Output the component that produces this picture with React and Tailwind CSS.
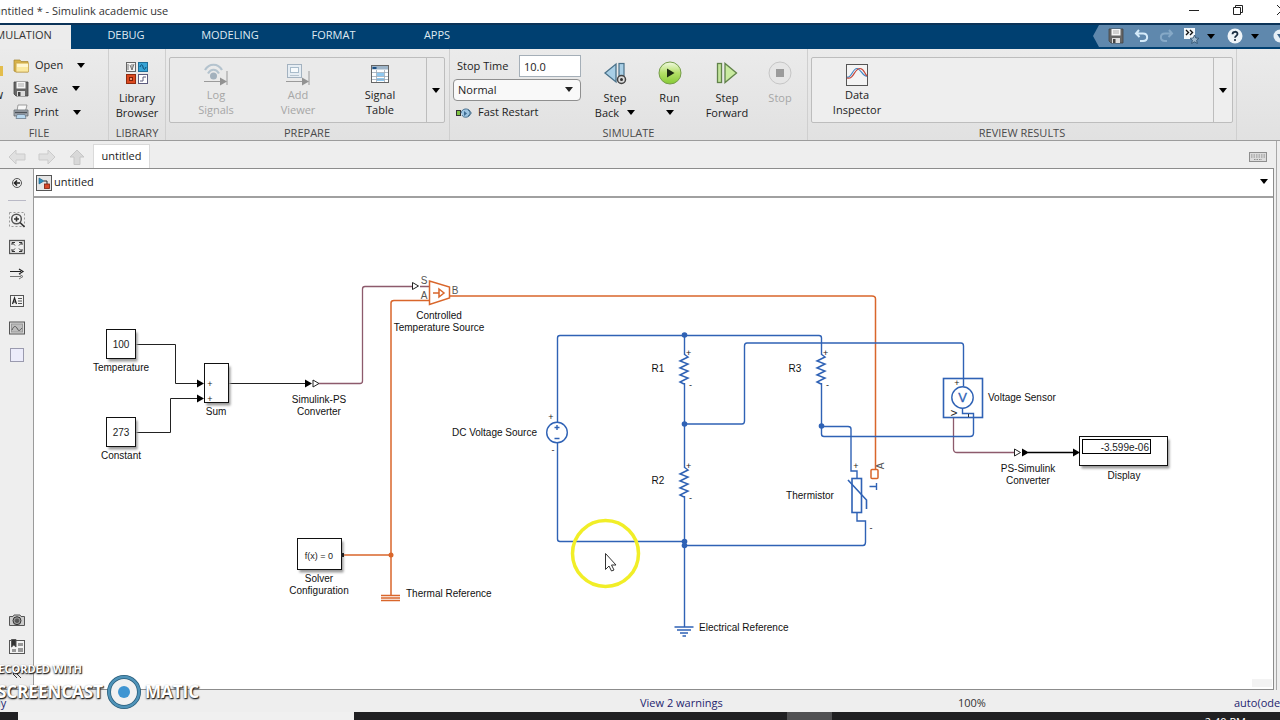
import React from "react";

const UI = "font-['Open_Sans','Noto_Sans',sans-serif]";

function Caret({ className = "" }) {
  return (
    <svg viewBox="0 0 8 5" className={"h-[5px] w-2 shrink-0 " + className} aria-hidden="true">
      <path d="M0 0H8L4 5Z" fill="currentColor" />
    </svg>
  );
}

/* ---------- ribbon icons ---------- */

const FolderIcon = () => (
  <svg viewBox="0 0 17 16" className="h-4 w-[17px]">
    <path d="M1 3V13L3 14H15V3.500H8L7 2H1Z" fill="#d9b44a" stroke="#a5842f" strokeWidth=".7" />
    <path d="M3 5H15.500V14H3Z" fill="#fbe9a0" stroke="#c4a14a" strokeWidth=".7" />
    <path d="M4 6H15V9H4Z" fill="#fff6d0" />
  </svg>
);

const SaveIcon = ({ className = "h-4 w-4" }) => (
  <svg viewBox="0 0 16 16" className={className}>
    <path d="M1 1H15V15H3L1 13Z" fill="#666" stroke="#444" strokeWidth=".8" />
    <rect x="3.500" y="1" width="9" height="6.500" fill="#f6f6f6" />
    <path d="M5 3H11M5 5H11" stroke="#aaa" />
    <rect x="4" y="10" width="8" height="5" fill="#ddd" />
    <rect x="5" y="11" width="2.500" height="4" fill="#444" />
  </svg>
);

const PrintIcon = () => (
  <svg viewBox="0 0 16 16" className="h-4 w-4">
    <path d="M4 7L5 1H14L12.500 7Z" fill="#f8f8f8" stroke="#888" strokeWidth=".8" />
    <path d="M1 6H15V12H1Z" fill="#a4aab2" stroke="#63696f" strokeWidth=".8" />
    <path d="M2 8.500H14" stroke="#4c5258" strokeWidth="1.500" />
    <path d="M4 10.500H12L13 14.500H3Z" fill="#b8d8ef" stroke="#6c7c8c" strokeWidth=".8" />
  </svg>
);

const LibraryIcon = () => (
  <svg viewBox="0 0 24 24" className="h-6 w-6">
    <rect x="1.500" y="1.500" width="9" height="9" fill="#f3f3f3" stroke="#666" />
    <path d="M3 3V9M5 4L7 9V3M9 3L7 9" stroke="#777" fill="none" />
    <rect x="13.500" y="1.500" width="9" height="9" fill="#35a3d6" stroke="#1e6d97" />
    <path d="M15 6C16 3 17.500 3 18 6S20 9 21 6" stroke="#0b4c74" fill="none" />
    <rect x="1.500" y="13.500" width="9" height="9" fill="#dc4a20" stroke="#8f2c10" />
    <rect x="4.500" y="16.500" width="3" height="3" fill="#f0916e" stroke="#7b210a" />
    <rect x="13.500" y="13.500" width="9" height="9" fill="#fff" stroke="#5b5b7d" />
    <path d="M15 20H18V16H21" stroke="#5b5b7d" fill="none" />
  </svg>
);

const LogIcon = () => (
  <svg viewBox="0 0 24 24" className="h-6 w-6" fill="none">
    <path d="M1 7C5 0 14 0 18 7" stroke="#b4c3ce" strokeWidth="2.200" />
    <path d="M4 10.500C7 5.500 12 5.500 15 10.500" stroke="#b4c3ce" strokeWidth="2.200" />
    <circle cx="9.500" cy="13" r="3.500" fill="#a3b1bd" />
    <path d="M0 18.500H18M23 8V22" stroke="#9a9a9a" />
    <path d="M16 14.500L23 18.500L16 22.500Z" fill="#929292" />
  </svg>
);

const ViewerIcon = () => (
  <svg viewBox="0 0 24 24" className="h-6 w-6" fill="none">
    <rect x="1.500" y="1.500" width="14" height="13" fill="#e6edf3" stroke="#a3b2c0" />
    <rect x="4.500" y="4.500" width="8" height="5" fill="#f7fafc" stroke="#a9bccb" />
    <path d="M4 12.500H13" stroke="#b7c4cf" />
    <path d="M0 18.500H18M23 8V22" stroke="#9a9a9a" />
    <path d="M16 14.500L23 18.500L16 22.500Z" fill="#929292" />
  </svg>
);

const TableIcon = () => (
  <svg viewBox="0 0 18 18" className="mt-[2px] mb-1 h-[18px] w-[18px]" fill="none">
    <rect x=".5" y=".5" width="17" height="17" fill="#fff" stroke="#666" />
    <rect x="1" y="1" width="16" height="3.500" fill="#9db4c8" />
    <rect x="1.500" y="2" width="4" height="2" fill="#1c4f83" />
    <rect x="6" y="8" width="7" height="3" fill="#8fc8f0" />
    <rect x="6" y="13" width="7" height="3" fill="#8fc8f0" />
    <path d="M5.500 5V17M13.500 5V17M1 7.500H17M1 11.500H17M1 14.500H17" stroke="#9aa9b7" strokeWidth=".8" />
  </svg>
);

const InspectorIcon = () => (
  <svg viewBox="0 0 24 24" className="h-6 w-6" fill="none">
    <rect x="1.500" y="1.500" width="21" height="21" fill="#f4f4f4" stroke="#555" />
    <path d="M2 14C6 16 8 5 12 5.500S18 14 22 13" stroke="#3f86c6" strokeWidth="1.200" />
    <path d="M2 15C9 17 9 5.500 15 5.500C19 5.500 19 10 22 13" stroke="#c4473b" strokeWidth="1.200" />
  </svg>
);

const StepBackIcon = () => (
  <svg viewBox="0 0 24 24" className="h-6 w-6">
    <path d="M13 3V21L2 12Z" fill="#a9cfe6" stroke="#4a7189" strokeWidth="1.300" />
    <rect x="16" y="2.500" width="5" height="15" fill="#a9cfe6" stroke="#4a7189" strokeWidth="1.200" />
    <circle cx="18.500" cy="18.500" r="4" fill="#d9d9d9" stroke="#444" strokeWidth="1.500" />
    <circle cx="18.500" cy="18.500" r="1.500" fill="#333" />
  </svg>
);

const RunIcon = () => (
  <svg viewBox="0 0 24 24" className="h-6 w-6">
    <defs>
      <linearGradient id="run" x1="0" x2="0" y1="0" y2="1">
        <stop offset="0" stopColor="#f1f9e2" />
        <stop offset=".5" stopColor="#b4e068" />
        <stop offset="1" stopColor="#86cb36" />
      </linearGradient>
    </defs>
    <circle cx="12" cy="12" r="11" fill="url(#run)" stroke="#769d4b" />
    <path d="M9 7.500L16.500 12L9 16.500Z" fill="#1d2b12" />
  </svg>
);

const StepForwardIcon = () => (
  <svg viewBox="0 0 24 24" className="h-6 w-6">
    <rect x="2.500" y="2.500" width="4" height="19" fill="#c4e59c" stroke="#62834b" strokeWidth="1.300" />
    <path d="M10 2.500V21.500L21.500 12Z" fill="#c9eba0" stroke="#62834b" strokeWidth="1.300" />
  </svg>
);

const StopIcon = () => (
  <svg viewBox="0 0 24 24" className="h-6 w-6">
    <circle cx="12" cy="12" r="11" fill="#e6e6e6" stroke="#c6c6c6" />
    <rect x="8" y="8" width="8" height="8" fill="#9b9b9b" />
  </svg>
);

const FastRestartIcon = () => (
  <svg viewBox="0 0 16 12" className="h-3 w-4" fill="none">
    <rect x=".5" y="3.500" width="4" height="5" fill="#7ec242" stroke="#333" />
    <path d="M5 6C6 1 12 1 14 4V8C12 11 7 11 6 8" fill="#9cc4e2" stroke="#47708f" />
    <path d="M8 4V9L11 6.500Z" fill="#3c6b92" />
    <path d="M12 3L15.500 6L12 9" stroke="#47708f" />
  </svg>
);

/* ---------- ribbon parts ---------- */

function Section({ label, className = "", children }) {
  return (
    <section className={"flex shrink-0 flex-col border-r border-[#cfcfcf] " + className}>
      <div className="flex h-[75px] shrink-0">{children}</div>
      <h2 className="flex flex-1 justify-center text-[11px] leading-[17px] text-[#4a4a4a]">{label}</h2>
    </section>
  );
}

function BigButton({ icon, lines, disabled, caret, className = "" }) {
  return (
    <button
      type="button"
      disabled={disabled}
      className={
        "flex flex-col items-center text-[11px] leading-[15px] " +
        (disabled ? "text-[#a6a6a6] " : "text-[#222] ") +
        className
      }
    >
      {icon}
      <span>{lines[0]}</span>
      <span className="flex h-[15px] items-center gap-2">
        {lines[1]}
        {caret && <Caret className="text-black" />}
      </span>
    </button>
  );
}

function FileRow({ icon, label, gap }) {
  return (
    <button type="button" className="flex h-6 items-center text-[11px] text-[#222]">
      {icon}
      <span className={"pl-[5px] text-left " + gap}>{label}</span>
      <Caret className="text-black" />
    </button>
  );
}

function Ribbon() {
  return (
    <div className="flex h-[92px] shrink-0 overflow-hidden border-b border-[#9c9c9c] bg-linear-to-b from-[#ebebeb] to-[#e1e1e1]">
      <Section label="FILE" className="-ml-[30px] w-[139px]">
        <button type="button" className="flex w-[33px] flex-col items-end pt-[17px] text-[12px] text-[#222]">
          <svg viewBox="0 0 20 20" className="h-5 w-5">
            <rect x="2" y="0" width="18" height="10" fill="#e3bd4c" />
          </svg>
          New
        </button>
        <div className="flex flex-col pt-[5px] pl-[10px]">
          <FileRow icon={<FolderIcon />} label="Open" gap="w-[47px]" />
          <FileRow icon={<SaveIcon />} label="Save" gap="w-[43px]" />
          <FileRow icon={<PrintIcon />} label="Print" gap="w-[44px]" />
        </div>
      </Section>
      <Section label="LIBRARY" className="w-[57px]">
        <BigButton icon={<LibraryIcon />} lines={["Library", "Browser"]} className="w-full pt-3 [&>svg]:mb-[5px]" />
      </Section>
      <Section label="PREPARE" className="w-[284px] pl-[3px] pr-1">
        <div className="mt-2 flex h-[66px] flex-1 rounded-xs border border-[#bdbdbd] bg-[#eaeaea]">
          <div className="flex flex-1 pt-[5px] pl-[5px]">
            <BigButton icon={<LogIcon />} lines={["Log", "Signals"]} disabled className="w-[82px]" />
            <BigButton icon={<ViewerIcon />} lines={["Add", "Viewer"]} disabled className="w-[82px]" />
            <BigButton icon={<TableIcon />} lines={["Signal", "Table"]} className="w-[82px]" />
          </div>
          <button type="button" aria-label="More prepare tools" className="grid w-[18px] place-items-center border-l border-[#bdbdbd]">
            <Caret />
          </button>
        </div>
      </Section>
      <Section label="SIMULATE" className="w-[358px]">
        <div className="flex w-[131px] flex-col pt-[6px] pl-[3px] text-[11px] text-[#222]">
          <div className="flex h-[22px] items-center justify-between">
            <label htmlFor="stop" className="pl-1">Stop Time</label>
            <input id="stop" defaultValue="10.0" className="h-[22px] w-[62px] border border-[#a5afb8] bg-white px-1" />
          </div>
          <div className="relative mt-[2px]">
            <select aria-label="Simulation mode" className="block h-[22px] w-full appearance-none rounded border border-[#8f8f8f] bg-[#f9f9f9] px-1">
              <option>Normal</option>
            </select>
            <Caret className="pointer-events-none absolute top-2 right-2" />
          </div>
          <button type="button" className="flex h-6 items-center gap-[6px] pl-[3px]">
            <FastRestartIcon />
            Fast Restart
          </button>
        </div>
        <div className="flex pt-3 pl-[7px] [&_svg.h-6]:mb-[5px]">
          <BigButton icon={<StepBackIcon />} lines={["Step", "Back"]} caret className="w-[54px]" />
          <BigButton icon={<RunIcon />} lines={["Run", ""]} caret className="w-[55px] [&>span:last-child]:gap-0" />
          <BigButton icon={<StepForwardIcon />} lines={["Step", "Forward"]} className="w-[60px]" />
          <BigButton icon={<StopIcon />} lines={["Stop", ""]} disabled className="w-[46px]" />
        </div>
      </Section>
      <Section label="REVIEW RESULTS" className="w-[429px] px-[3px]">
        <div className="mt-2 flex h-[66px] flex-1 rounded-xs border border-[#bdbdbd] bg-[#eeeeee]">
          <div className="flex flex-1 pt-[5px]">
            <BigButton icon={<InspectorIcon />} lines={["Data", "Inspector"]} className="w-[90px]" />
          </div>
          <button type="button" aria-label="More review tools" className="grid w-[19px] place-items-center border-l border-[#bdbdbd]">
            <Caret />
          </button>
        </div>
      </Section>
    </div>
  );
}

/* ---------- title and tabs ---------- */

function TitleBar() {
  return (
    <header className="flex h-[23px] shrink-0 items-center justify-between overflow-hidden bg-white">
      <h1 className="-ml-[6px] text-[11px] whitespace-pre text-[#333]">untitled * - Simulink academic use</h1>
      <div className="-mr-[8px] flex h-full items-center gap-[33px] pb-[2px] text-[#222]">
        <button type="button" aria-label="Minimize">
          <svg viewBox="0 0 11 11" className="h-[11px] w-[11px]"><path d="M0 5.500H10" stroke="currentColor" /></svg>
        </button>
        <button type="button" aria-label="Restore">
          <svg viewBox="0 0 11 11" className="h-[11px] w-[11px]" fill="none" stroke="currentColor">
            <path d="M.5 2.500H7.500V9.500H.5ZM2.500 2.500V.5H9.500V7.500H7.500" />
          </svg>
        </button>
        <button type="button" aria-label="Close">
          <svg viewBox="0 0 11 11" className="h-[11px] w-[11px]" stroke="currentColor"><path d="M0 0L10 10M10 0L0 10" /></svg>
        </button>
      </div>
    </header>
  );
}

function QuickAccess() {
  return (
    <div className="flex h-[22px] w-[187px] items-center overflow-hidden bg-[#5f88ad] pl-[15px] text-black [clip-path:polygon(6px_0,100%_0,100%_100%,6px_100%,0_50%)]">
      <button type="button" aria-label="Save"><SaveIcon /></button>
      <button type="button" aria-label="Undo" className="ml-[10px]">
        <svg viewBox="0 0 15 14" className="h-[14px] w-[15px]" fill="none">
          <path d="M5 1L2 4.500L5.500 8M2 4.500H9C14.500 4.500 14.500 12 9 12H6" stroke="#d5ebfa" strokeWidth="2" />
        </svg>
      </button>
      <button type="button" aria-label="Redo" className="ml-[10px]">
        <svg viewBox="0 0 15 14" className="h-[14px] w-[15px]" fill="none">
          <path d="M10 1L13 4.500L9.500 8M13 4.500H6C.5 4.500 .5 12 6 12H8" stroke="#86a9c7" strokeWidth="2" />
        </svg>
      </button>
      <button type="button" aria-label="Favorites" className="ml-[10px] flex items-center gap-2">
        <svg viewBox="0 0 15 16" className="h-4 w-[15px]" fill="none">
          <rect x="0" y="0" width="11" height="11" fill="#f3f7fa" />
          <path d="M2 2L4.500 4.500L2 7M6 2L8.500 4.500L6 7" stroke="#111" strokeWidth="1.400" />
          <path d="M10.500 7L11.800 10L15 10.300L12.600 12.300L13.400 15.500L10.500 13.800L7.600 15.500L8.400 12.300L6 10.300L9.200 10Z" fill="#9cb7cd" stroke="#2f4f6b" strokeWidth=".8" />
        </svg>
        <Caret />
      </button>
      <button type="button" aria-label="Help" className="ml-3 flex items-center gap-2">
        <svg viewBox="0 0 16 16" className="h-4 w-4" fill="none">
          <circle cx="8" cy="8" r="7.500" fill="#eef4f8" />
          <path d="M5.500 6.200C5.500 3 10.500 3 10.500 6C10.500 7.800 8 8 8 9.800" stroke="#1b2f42" strokeWidth="1.800" />
          <circle cx="8" cy="12" r="1.100" fill="#1b2f42" />
        </svg>
        <Caret />
      </button>
      <button type="button" aria-label="Collapse toolstrip" className="ml-[14px] shrink-0">
        <svg viewBox="0 0 14 14" className="h-[14px] w-[14px]">
          <circle cx="7" cy="7" r="6.500" fill="#e6eff6" />
          <path d="M4 5H10L7 9.500Z" fill="#3d658b" />
        </svg>
      </button>
    </div>
  );
}

function TabBar() {
  return (
    <nav className="flex h-[26px] shrink-0 overflow-hidden border-t-2 border-[#0b3358] bg-[#004071] text-[11px] text-[#dfe9f1]">
      <button type="button" className="-ml-[33px] w-[104px] bg-[#ececec] pb-1 text-[#333]">SIMULATION</button>
      <button type="button" className="ml-[3px] w-[104px] pb-1">DEBUG</button>
      <button type="button" className="w-[104px] pb-1">MODELING</button>
      <button type="button" className="w-[103px] pb-1">FORMAT</button>
      <button type="button" className="w-[104px] pb-1">APPS</button>
      <div className="flex-1" />
      <QuickAccess />
    </nav>
  );
}

function DocTabs() {
  const arrow = "M1 8L8 1V5H17V11H8V15Z";
  return (
    <div className="flex h-[27px] shrink-0 items-end bg-[#eeeeee] pl-2">
      <div className="flex h-full items-center gap-3 pt-1 pr-[7px]">
        <button type="button" aria-label="Back">
          <svg viewBox="0 0 18 16" className="h-4 w-[18px]"><path d={arrow} fill="#e0e0e0" stroke="#cbcbcb" /></svg>
        </button>
        <button type="button" aria-label="Forward">
          <svg viewBox="0 0 18 16" className="h-4 w-[18px] -scale-x-100"><path d={arrow} fill="#e0e0e0" stroke="#cbcbcb" /></svg>
        </button>
        <button type="button" aria-label="Up">
          <svg viewBox="0 0 18 16" className="h-4 w-[18px]"><path d="M9 1L16 8H12V15.500H6V8H2Z" fill="#d8d8d8" stroke="#c6c6c6" /></svg>
        </button>
      </div>
      <button type="button" className="h-6 w-[57px] border border-b-0 border-[#dadada] bg-white text-[11px] text-[#222]">untitled</button>
      <div className="flex-1" />
      <button type="button" aria-label="Keyboard" className="mr-[7px] self-center pt-1">
        <svg viewBox="0 0 18 10" className="h-[10px] w-[18px]" fill="none">
          <rect x=".5" y=".5" width="17" height="9" fill="#dcdcdc" stroke="#8e8e8e" />
          <path d="M2 3H16M2 5H16M5 7.500H13" stroke="#8e8e8e" strokeDasharray="1.500 1" />
        </svg>
      </button>
    </div>
  );
}

/* ---------- left palette ---------- */

function Tool({ label, children }) {
  return (
    <button type="button" aria-label={label} className="grid h-[27px] w-full shrink-0 place-items-center">
      <svg viewBox="0 0 16 16" className="h-4 w-4" fill="none" stroke="#555">{children}</svg>
    </button>
  );
}

function Palette() {
  return (
    <aside className="flex w-[34px] shrink-0 flex-col items-center overflow-hidden border-r border-[#9a9a9a] bg-[#eeeeee] pb-[2px]">
      <Tool label="Hide browser">
        <circle cx="8" cy="8" r="4.500" />
        <path d="M11 8H6M8 5.500L5.500 8L8 10.500" stroke="#222" strokeWidth="1.600" />
      </Tool>
      <div className="mt-1 mb-[5px] h-px w-[18px] shrink-0 bg-[#b9b9c6]" />
      <Tool label="Zoom">
        <rect x=".5" y=".5" width="15" height="14" strokeDasharray="2 2" stroke="#999" />
        <circle cx="7.500" cy="7" r="4.800" strokeWidth="1.500" fill="#f6f6f6" />
        <path d="M5 7H10M7.500 4.500V9.500M11 10.500L15.500 15" stroke="#333" strokeWidth="1.600" />
      </Tool>
      <Tool label="Fit to view">
        <rect x=".5" y="1.500" width="15" height="13" strokeWidth="1.300" />
        <path d="M3 6V3.500H6M3.500 4L6 6.500M10 3.500H13V6M12.500 4L10 6.500M3 10V12.500H6M3.500 12L6 9.500M10 12.500H13V10M12.500 12L10 9.500" stroke="#333" />
      </Tool>
      <Tool label="Signals">
        <path d="M1 5.500H12M10 3L14 5.500L10 8" stroke="#222" strokeWidth="1.200" />
        <path d="M1 10.500H12M10 8L14 10.500L10 13" stroke="#777" />
      </Tool>
      <Tool label="Annotation">
        <rect x="1.500" y="2.500" width="13" height="11" fill="#f3f3f3" />
        <path d="M3.500 11L5.500 5L7.500 11M4 9H7" stroke="#222" strokeWidth="1.200" />
        <path d="M9 5.500H13M9 8H13M9 10.500H13" />
      </Tool>
      <Tool label="Image">
        <rect x=".5" y="2" width="15" height="12" fill="#ddd" />
        <rect x="2.500" y="4" width="11" height="8" fill="#bdbdbd" stroke="#999" />
        <path d="M3 10C5 5 7 6 8.500 9S11 10 13 8" />
      </Tool>
      <Tool label="Area">
        <rect x="1.500" y="1.500" width="13" height="13" fill="#ececfb" stroke="#9a9aae" />
      </Tool>
      <div className="flex-1" />
      <Tool label="Screenshot">
        <path d="M.5 4.500H4L5 3H11L12 4.500H15.500V13.500H.5Z" fill="#ccc" />
        <circle cx="8" cy="8.700" r="4" fill="#999" stroke="#333" />
        <circle cx="8" cy="8.700" r="1.800" fill="#555" />
      </Tool>
      <Tool label="Model browser">
        <rect x=".5" y="1.500" width="15" height="13" fill="#f3f3f3" />
        <path d="M2.500 .5H7V8L4.800 6L2.500 8Z" fill="#333" />
        <path d="M9 4H14V7H9ZM3 10H7V13H3ZM9 9H14V13H9Z" fill="#999" stroke="none" />
      </Tool>
      <Tool label="Collapse palette">
        <path d="M8 4L4 8L8 12M12 4L8 8L12 12" stroke="#333" />
      </Tool>
    </aside>
  );
}

/* ---------- block diagram ---------- */

const BLUE = "#2f62b5";
const ORANGE = "#d9662b";

function Label({ x, y, lines, anchor = "middle" }) {
  return (
    <text x={x} y={y} textAnchor={anchor} fontSize="10" fill="#111">
      {lines.map((l, i) => (
        <tspan key={l} x={x} dy={i ? 12 : 0}>{l}</tspan>
      ))}
    </text>
  );
}

function Block({ x, y, w, h }) {
  return (
    <g>
      <rect x={x + 2} y={y + 3} width={w} height={h} fill="#9b9b9b" filter="url(#soft)" />
      <rect x={x} y={y} width={w} height={h} fill="#fff" stroke="#111" />
    </g>
  );
}

function Resistor({ x, y }) {
  return (
    <g>
      <path
        d={`M${x} ${y}L${x + 4} ${y + 3}L${x - 4} ${y + 7}L${x + 4} ${y + 10}L${x - 4} ${y + 14}L${x + 4} ${y + 17}L${x - 4} ${y + 21}L${x + 4} ${y + 24}L${x - 4} ${y + 28}L${x} ${y + 30}`}
        stroke={BLUE}
        strokeWidth="1.500"
        fill="none"
      />
      <text x={x + 2} y={y + 2} fontSize="9" fill="#222">+</text>
      <text x={x + 5} y={y + 34} fontSize="9" fill="#222">-</text>
    </g>
  );
}

const Arrow = ({ x, y }) => <path d={`M${x - 7} ${y - 4}L${x} ${y}L${x - 7} ${y + 4}Z`} fill="#000" />;
const OpenArrow = ({ x, y }) => (
  <path d={`M${x - 6} ${y - 3.5}L${x} ${y}L${x - 6} ${y + 3.5}Z`} fill="#fff" stroke="#222" />
);

function Diagram() {
  return (
    <svg
      viewBox="34 198 1238 490"
      className="block h-[490px] w-[1238px] font-['Liberation_Sans',Arial,sans-serif]"
      role="img"
      aria-label="Wheatstone bridge thermistor model"
    >
      <defs>
        <filter id="soft"><feGaussianBlur stdDeviation="1.2" /></filter>
      </defs>

      <g fill="none" stroke="#222">
        <path d="M136 344.500H175.500V383.500H198" />
        <path d="M136 432.500H170.500V398.500H198" />
        <path d="M229 383.500H306" />
        <path d="M1028 452.500H1074" strokeWidth="1.400" stroke="#000" />
      </g>
      <g fill="none" stroke="#8d5a6c" strokeWidth="1.300">
        <path d="M319 383.500H360Q362.500 383.500 362.500 381V289Q362.500 286.500 365 286.500H412M420 286.500H429" />
        <path d="M953.500 418V449Q953.500 452.500 957 452.500H1014" />
      </g>
      <g fill="none" stroke={ORANGE} strokeWidth="1.500">
        <path d="M429 300.500H394Q391 300.500 391 303V596M343 555H391" />
        <path d="M450 296H872Q875.500 296 875.500 299V469" />
        <path d="M429.500 281V304.500L449.500 298V287Z" />
        <path d="M433 293H439M439 289L444 293L439 297Z" />
        <path d="M381 595.500H400M381 598H400M381 600.500H400" />
        <rect x="871" y="469.500" width="7" height="9" rx="1" />
      </g>
      <circle cx="391" cy="555" r="2.500" fill={ORANGE} />

      <g fill="none" stroke={BLUE} strokeWidth="1.400">
        <path d="M557.500 422V338Q557.500 335.500 560 335.500H819Q821.500 335.500 821.500 338V354" />
        <path d="M557.500 442V539Q557.500 541.500 560 541.500H684" />
        <path d="M684.500 335V354M684.500 383V467M684.500 496V627" />
        <path d="M684 424H742Q744.500 424 744.500 421V346Q744.500 343 747 343H961Q963.500 343 963.500 346V386" />
        <path d="M821.500 383V434Q821.500 436.500 824 436.500H970Q973.500 436.500 973.500 433V413.500H962.500V408" />
        <path d="M821 426.500H848Q851 426.500 851 429V471H857V478" />
        <path d="M857 513V521H865.500V542Q865.500 545.500 863 545.500H684" />
        <rect x="852" y="478.500" width="9.500" height="34" strokeWidth="1.600" />
        <path d="M848 480L866.500 500V509" strokeWidth="1.600" />
        <circle cx="557" cy="432.500" r="10.300" />
        <path d="M554.500 427.500H559.500M557 425V430M554.500 438.500H559.500" />
        <rect x="943.500" y="378.500" width="39" height="39" strokeWidth="1.600" />
        <circle cx="962.500" cy="397.500" r="10.700" />
        <path d="M674.500 627H693.500M677 630H691M680 633H688M682.500 636H686" />
        <path d="M876.500 483V490M869.500 486.500H876" />
        <path d="M968.500 414V417" stroke="#333" strokeWidth="1" />
      </g>
      <g fill={BLUE}>
        <circle cx="684.500" cy="335" r="2.800" />
        <circle cx="684.500" cy="424" r="2.800" />
        <circle cx="684.500" cy="541.500" r="2.800" />
        <circle cx="684.500" cy="545.500" r="2.800" />
        <circle cx="821.500" cy="426" r="2.800" />
      </g>
      <Resistor x={684} y={354} />
      <Resistor x={684} y={467} />
      <Resistor x={821} y={354} />

      <Block x={106.5} y={329.5} w={29} h={29} />
      <Block x={106.5} y={417.5} w={29} h={29} />
      <Block x={204.5} y={363.500} w={24} h={39} />
      <Block x={297.5} y={538.5} w={44} h={31} />
      <Block x={1079.5} y={436.5} w={88} h={29} />
      <rect x="1082.500" y="439.500" width="68" height="14" fill="#fff" stroke="#000" />
      <rect x="341" y="553" width="3" height="4" fill="#222" />
      <Arrow x={204} y={383.5} />
      <Arrow x={204} y={398.5} />
      <Arrow x={312} y={383.5} />
      <Arrow x={1029} y={452.5} />
      <Arrow x={1080} y={452.5} />
      <OpenArrow x={319} y={383.5} />
      <OpenArrow x={418.5} y={286} />
      <OpenArrow x={1020.5} y={452.5} />

      <g fontSize="10" fill="#222" textAnchor="middle">
        <text x="121" y="348">100</text>
        <text x="121" y="436">273</text>
        <text x="319" y="559" fontSize="9">f(x) = 0</text>
        <text x="210" y="387" fontSize="9">+</text>
        <text x="210" y="402" fontSize="9">+</text>
        <text x="1149" y="451" textAnchor="end">-3.599e-06</text>
        <g fill="#555">
          <text x="424" y="284">S</text>
          <text x="424" y="299">A</text>
          <text x="455" y="294">B</text>
          <text transform="translate(884 466) rotate(-90)">A</text>
        </g>
        <text x="551" y="420" fontSize="9">+</text>
        <text x="553" y="453" fontSize="9">-</text>
        <text x="856" y="469" fontSize="9">+</text>
        <text x="871" y="531" fontSize="9">-</text>
        <text x="957" y="386" fontSize="9">+</text>
        <text transform="translate(957 413) rotate(-90)" fontSize="9">V</text>
        <text x="962.500" y="402" fontSize="13" fill={BLUE} stroke={BLUE} strokeWidth=".3">V</text>
      </g>

      <Label x={121} y={371} lines={["Temperature"]} />
      <Label x={121} y={459} lines={["Constant"]} />
      <Label x={216} y={415} lines={["Sum"]} />
      <Label x={319} y={403} lines={["Simulink-PS", "Converter"]} />
      <Label x={439} y={319} lines={["Controlled", "Temperature Source"]} />
      <Label x={319} y={582} lines={["Solver", "Configuration"]} />
      <Label x={406} y={597} lines={["Thermal Reference"]} anchor="start" />
      <Label x={537} y={436} lines={["DC Voltage Source"]} anchor="end" />
      <Label x={658} y={372} lines={["R1"]} />
      <Label x={658} y={484} lines={["R2"]} />
      <Label x={795} y={372} lines={["R3"]} />
      <Label x={810} y={499} lines={["Thermistor"]} />
      <Label x={988} y={401} lines={["Voltage Sensor"]} anchor="start" />
      <Label x={1028} y={472} lines={["PS-Simulink", "Converter"]} />
      <Label x={1124} y={479} lines={["Display"]} />
      <Label x={699} y={631} lines={["Electrical Reference"]} anchor="start" />

      <circle cx="605.500" cy="553.500" r="33" fill="none" stroke="#f1ee27" strokeWidth="3.500" />
      <path d="M605.500 553.500V569.500L609 566L611.500 571L614 570L611.500 565H616Z" fill="#fff" stroke="#333" />
      <rect x="1252" y="679" width="20" height="8" fill="#f3f3f3" />
    </svg>
  );
}

function Watermark() {
  return (
    <div className="pointer-events-none absolute bottom-[11px] -left-[9px] font-['Open_Sans','Noto_Sans',sans-serif] font-bold text-white [text-shadow:1px_1px_1px_#222,0_1px_2px_#333]">
      <p className="h-3 text-[11px] leading-3">RECORDED WITH</p>
      <div className="flex items-center gap-1">
        <span className="flex w-28 justify-end text-[17px] leading-8">SCREENCAST</span>
        <svg viewBox="0 0 34 34" className="h-[34px] w-[34px]">
          <circle cx="17" cy="17" r="15" fill="#f1f1f1" stroke="#285c7a" strokeWidth="4" />
          <circle cx="17" cy="17" r="15" fill="none" stroke="#4f93b8" strokeWidth="2.500" />
          <circle cx="17" cy="17" r="6" fill="#3f95d2" />
        </svg>
        <span className="text-[17px] leading-8">MATIC</span>
      </div>
    </div>
  );
}

export default function App() {
  return (
    <div className={"relative flex h-screen flex-col overflow-hidden bg-[#eeeeee] " + UI}>
      <TitleBar />
      <TabBar />
      <Ribbon />
      <div className="flex min-h-0 flex-1">
        <div className="flex min-w-0 flex-1 flex-col border-r border-[#a8a8a8] pr-[2px]">
          <DocTabs />
          <main className="flex min-h-0 flex-1 border-y border-[#8c8c8c]">
            <Palette />
            <div className="flex min-w-0 flex-1 flex-col border-r border-[#8c8c8c] bg-white">
              <div className="flex h-[29px] shrink-0 items-center justify-between border-b-2 border-[#a0a0a0] pr-[5px] pl-[2px]">
                <button type="button" className="flex items-center gap-[2px] text-[11px] text-[#222]">
                  <svg viewBox="0 0 16 16" className="h-4 w-4">
                    <rect x=".5" y=".5" width="15" height="15" fill="#e6e6e6" stroke="#555" />
                    <path d="M3 3V9L8 6Z" fill="#2a8fc0" stroke="#155a80" strokeWidth=".6" />
                    <path d="M8 6H11V9" stroke="#222" fill="none" />
                    <rect x="8.500" y="9" width="5" height="4.500" fill="#d8482a" stroke="#7c1d0b" strokeWidth=".8" />
                  </svg>
                  untitled
                </button>
                <button type="button" aria-label="Show model path" className="pb-[2px]"><Caret /></button>
              </div>
              <div className="min-h-0 flex-1 overflow-hidden"><Diagram /></div>
            </div>
          </main>
        </div>
        <div className="w-[3px]" />
      </div>
      <footer className="flex h-[22px] shrink-0 items-center overflow-hidden pt-1 text-[11px] whitespace-nowrap text-[#25256e]">
        <span className="-ml-[25px] w-[665px]">Ready</span>
        <a href="#warnings" className="w-[318px]">View 2 warnings</a>
        <span className="flex-1 text-[#333]">100%</span>
        <a href="#solver" className="w-[46px]">auto(ode45)</a>
      </footer>
      <div className="flex h-2 shrink-0 overflow-hidden bg-[#202022] text-[11px] text-white">
        <div className="ml-[18px] w-[336px] bg-[#f0f0f0]" />
        <div className="ml-[433px] w-[45px] bg-[#505052]" />
        <div className="flex-1" />
        <span className="mr-[34px] pt-1 leading-3">2:40 PM</span>
      </div>
      <Watermark />
    </div>
  );
}
